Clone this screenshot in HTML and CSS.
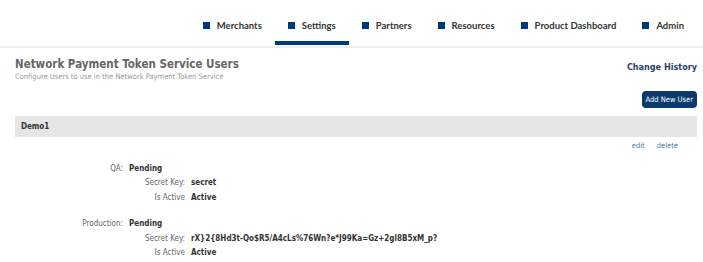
FILE: index.html
```html
<!DOCTYPE html>
<html lang="en">
<head>
    <meta charset="UTF-8">
    <title>Network Payment Token Service Users</title>
    <link rel="stylesheet" href="styles.css">
</head>
<body>
    <div class="topnav">
        <a class="nav-item" href="#"><span class="sq"></span>Merchants</a>
        <a class="nav-item active" href="#"><span class="sq"></span>Settings</a>
        <a class="nav-item" href="#"><span class="sq"></span>Partners</a>
        <a class="nav-item" href="#"><span class="sq"></span>Resources</a>
        <a class="nav-item" href="#"><span class="sq"></span>Product Dashboard</a>
        <a class="nav-item" href="#"><span class="sq"></span>Admin</a>
    </div>

    <div class="page">
        <div class="page-head">
            <div>
                <h1>Network Payment Token Service Users</h1>
                <div class="subtitle">Configure Users to use in the Network Payment Token Service</div>
            </div>
            <a class="history" href="#">Change History</a>
        </div>

        <div class="actions">
            <button class="btn">Add New User</button>
        </div>

        <div class="user-bar">Demo1</div>
        <div class="row-links">
            <a href="#">edit</a>
            <a href="#">delete</a>
        </div>

        <div class="env">
            <div class="env-row"><span class="lbl">QA:</span><b>Pending</b></div>
            <div class="sub-row"><span class="lbl">Secret Key:</span><b>secret</b></div>
            <div class="sub-row"><span class="lbl">Is Active</span><b>Active</b></div>
        </div>

        <div class="env">
            <div class="env-row"><span class="lbl">Production:</span><b>Pending</b></div>
            <div class="sub-row"><span class="lbl">Secret Key:</span><b>rX}2{8Hd3t-Qo$R5/A4cLs%76Wn?e*J99Ka=Gz+2gl8B5xM_p?</b></div>
            <div class="sub-row"><span class="lbl">Is Active</span><b>Active</b></div>
        </div>
    </div>
</body>
</html>
```

FILE: styles.css
```css
body {
    margin: 0;
    background: #fff;
    font-family: "DejaVu Sans Condensed", "DejaVu Sans", Tahoma, sans-serif;
    color: #333;
}

.topnav {
    display: flex;
    justify-content: flex-end;
    height: 46px;
    padding-right: 6px;
    border-bottom: 2px solid #eeeeee;
}

.nav-item {
    display: flex;
    align-items: center;
    gap: 7px;
    padding: 10px 13px 0 13px;
    height: 45px;
    box-sizing: border-box;
    font-family: Lato, "Open Sans", sans-serif;
    font-weight: 700;
    font-size: 9.5px;
    color: #333;
    text-decoration: none;
    border-bottom: 4px solid transparent;
}

.nav-item.active {
    border-bottom-color: #003a75;
}

.sq {
    width: 7px;
    height: 7px;
    background: #003a75;
}

.page {
    padding: 0 6px 0 15px;
}

.page-head {
    display: flex;
    justify-content: space-between;
    align-items: flex-start;
    padding-top: 9px;
}

h1 {
    margin: 0;
    font-size: 11.5px;
    font-weight: bold;
    color: #666;
}

.subtitle {
    font-size: 7.5px;
    color: #999;
    margin-top: 1px;
}

.history {
    margin-top: 5px;
    font-size: 9px;
    font-weight: bold;
    color: #1f3f6e;
    text-decoration: none;
}

.actions {
    display: flex;
    justify-content: flex-end;
    margin-top: 10px;
}

.btn {
    background: #0b3a70;
    color: #fff;
    border: 0;
    border-radius: 4px;
    font-family: "DejaVu Sans Condensed", sans-serif;
    font-size: 7.5px;
    padding: 3px 4px;
    height: 17px;
}

.user-bar {
    margin-top: 8px;
    background: #e6e6e7;
    height: 21px;
    line-height: 21px;
    padding-left: 6px;
    font-weight: bold;
    font-size: 8px;
    color: #333;
}

.row-links {
    display: flex;
    justify-content: flex-end;
    gap: 12px;
    padding-right: 19px;
    margin-top: 4px;
    font-size: 7.5px;
}

.row-links a {
    color: #4a7ab0;
    text-decoration: none;
}

.env {
    margin-top: 11px;
    font-size: 8px;
}

.env + .env {
    margin-top: 12px;
}

.env-row, .sub-row {
    display: flex;
    gap: 6px;
    height: 14.5px;
    align-items: center;
}

.env-row .lbl {
    width: 108px;
}

.sub-row .lbl {
    width: 170px;
}

.lbl {
    text-align: right;
    color: #666;
}

.env b {
    color: #333;
}
```
